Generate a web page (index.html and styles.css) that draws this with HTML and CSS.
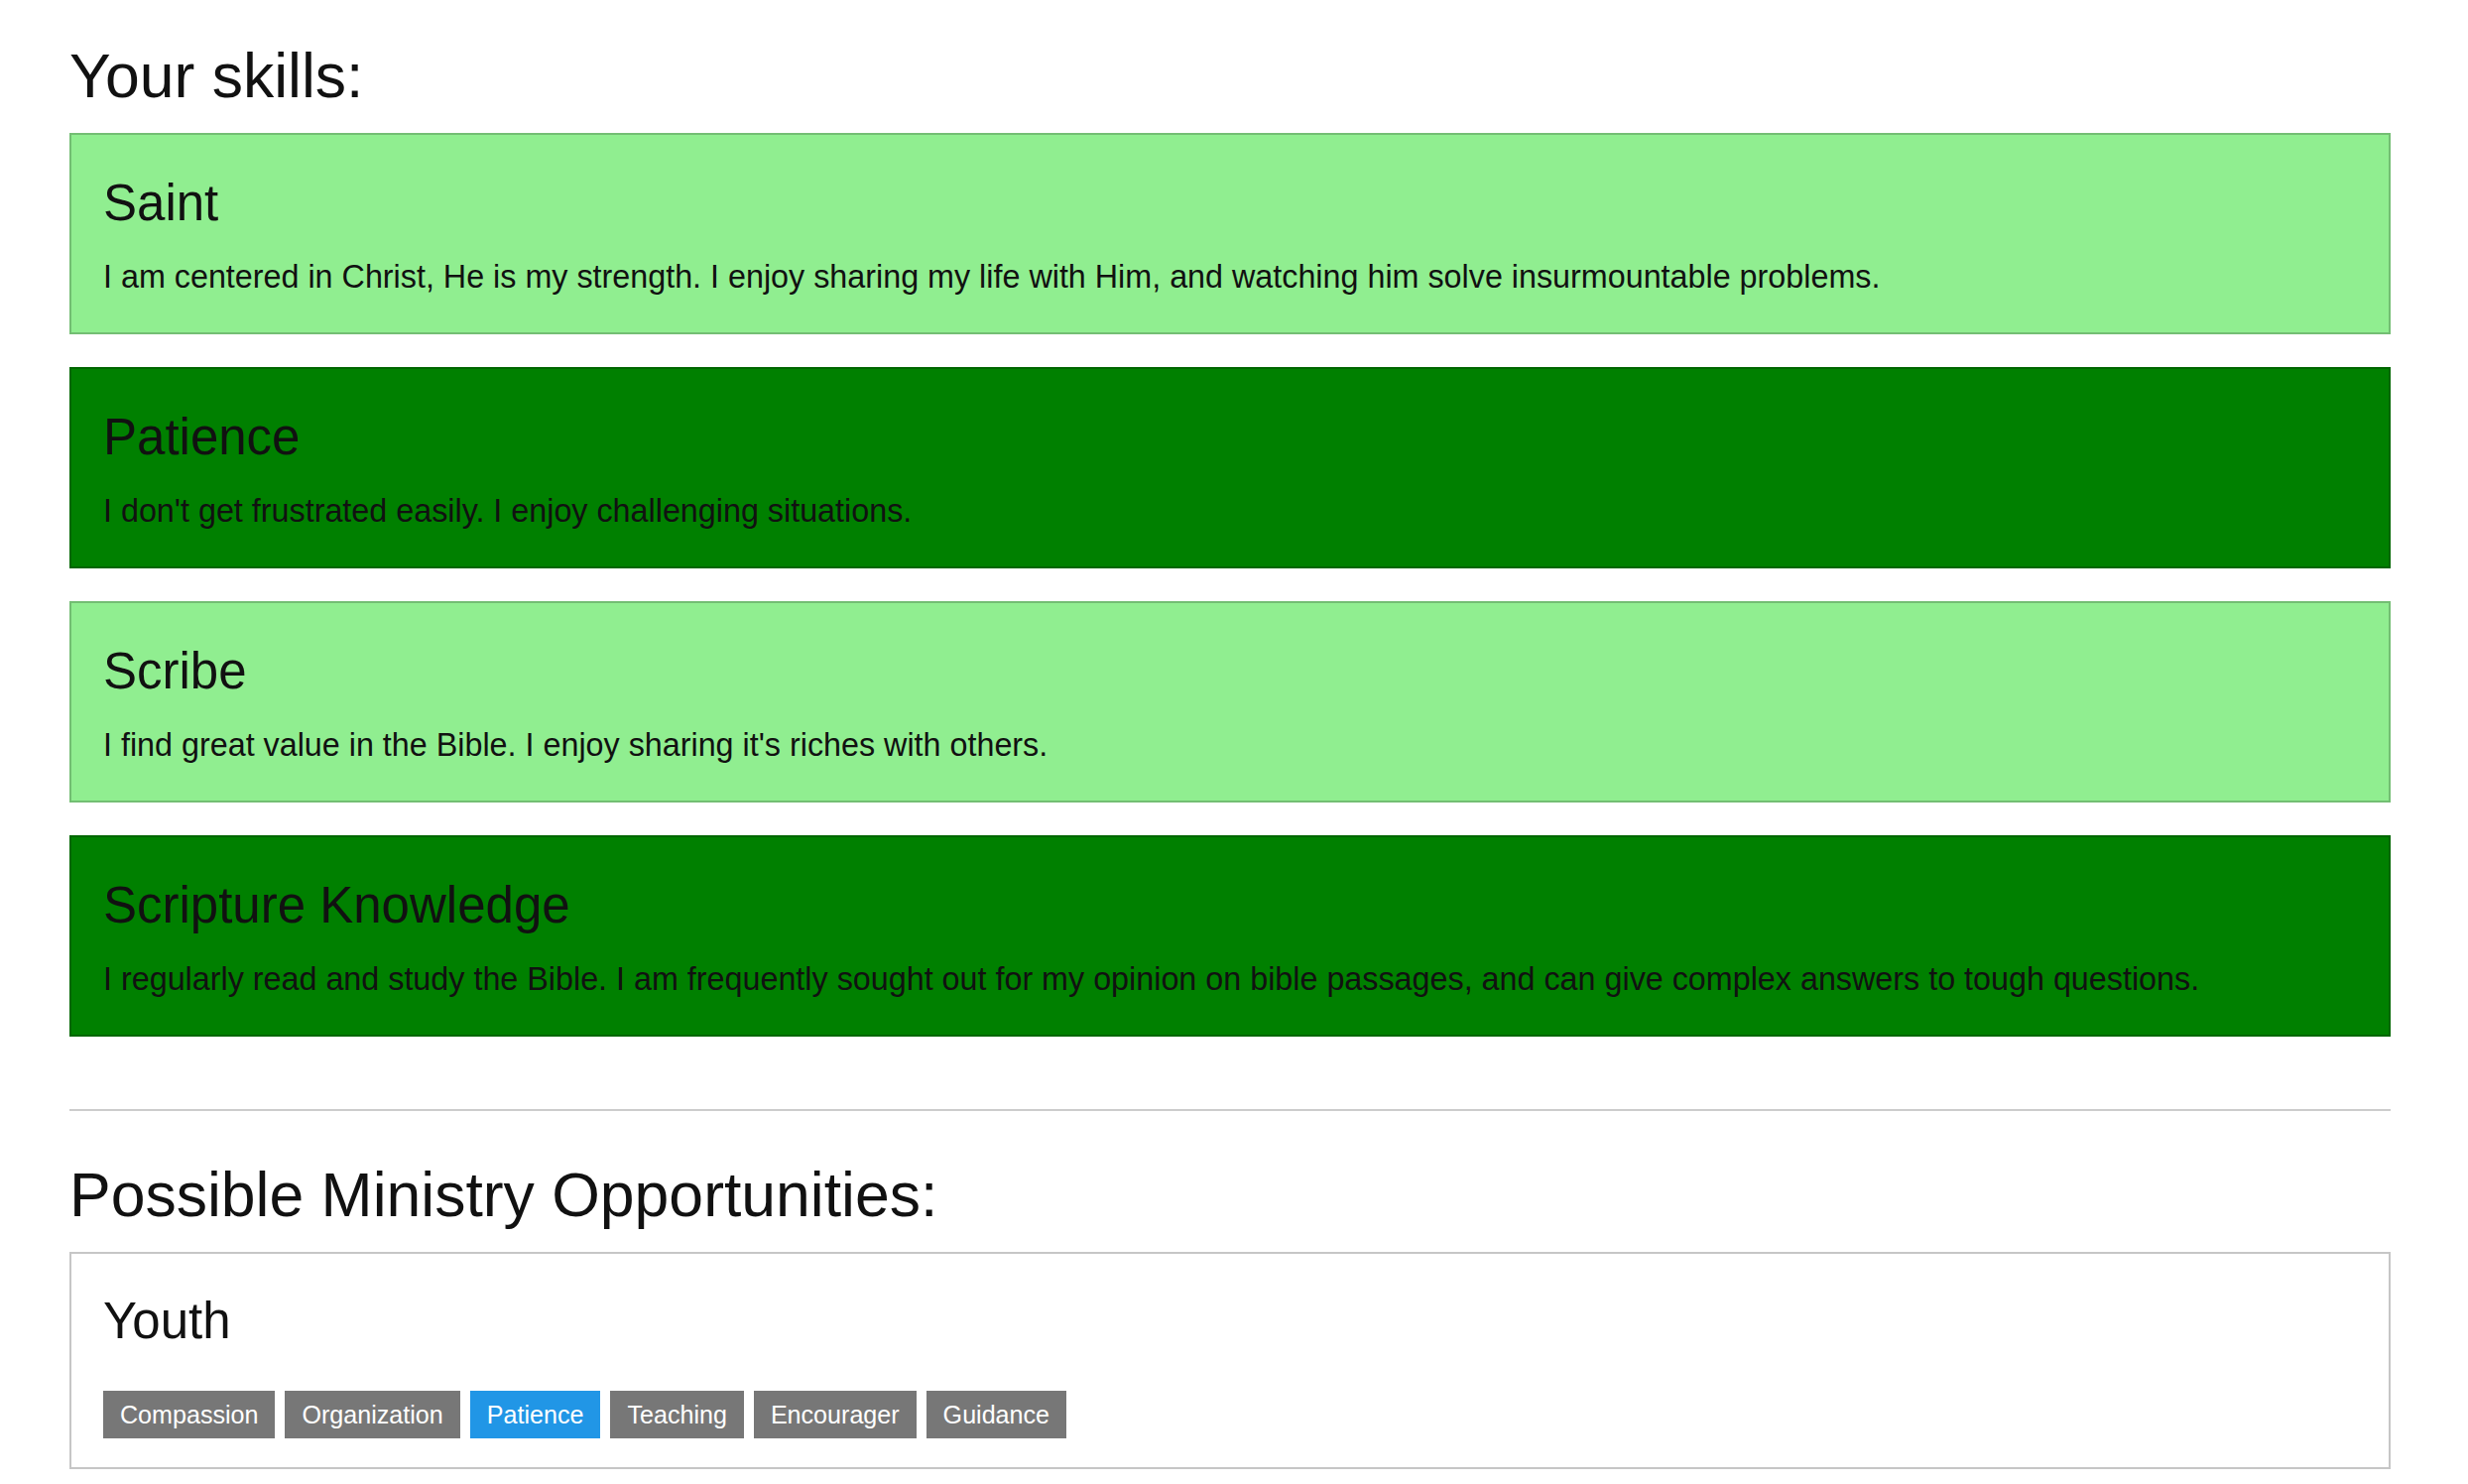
FILE: index.html
```html
<!DOCTYPE html>
<html lang="en">
<head>
<meta charset="utf-8">
<title>Your skills</title>
<link rel="stylesheet" href="styles.css">
</head>
<body>
<main class="page">
  <h1 class="section-title">Your skills:</h1>
  <section class="skill skill-light">
    <h3 class="card-title">Saint</h3>
    <p class="card-text">I am centered in Christ, He is my strength. I enjoy sharing my life with Him, and watching him solve insurmountable problems.</p>
  </section>
  <section class="skill skill-dark">
    <h3 class="card-title">Patience</h3>
    <p class="card-text">I don't get frustrated easily. I enjoy challenging situations.</p>
  </section>
  <section class="skill skill-light">
    <h3 class="card-title">Scribe</h3>
    <p class="card-text">I find great value in the Bible. I enjoy sharing it's riches with others.</p>
  </section>
  <section class="skill skill-dark skill-last">
    <h3 class="card-title">Scripture Knowledge</h3>
    <p class="card-text">I regularly read and study the Bible. I am frequently sought out for my opinion on bible passages, and can give complex answers to tough questions.</p>
  </section>

  <hr class="divider">

  <h1 class="section-title">Possible Ministry Opportunities:</h1>
  <section class="ministry">
    <h3 class="card-title">Youth</h3>
    <div class="tags">
      <span class="tag">Compassion</span>
      <span class="tag">Organization</span>
      <span class="tag tag-match">Patience</span>
      <span class="tag">Teaching</span>
      <span class="tag">Encourager</span>
      <span class="tag">Guidance</span>
    </div>
  </section>
</main>
</body>
</html>
```
FILE: styles.css
```css
html, body {
  margin: 0;
  padding: 0;
  background: #ffffff;
}

body {
  font-family: "Liberation Sans", Arial, Helvetica, sans-serif;
  color: #111111;
}

.page {
  width: 2340px;
  padding: 41px 0 0 70px;
}

.section-title {
  font-size: 62.5px;
  line-height: 70px;
  font-weight: 400;
  margin: 0 0 23px 0;
}

.skill {
  border: 2px solid rgba(0, 0, 0, 0.2);
  padding: 32px 32px 33px 32px;
  margin: 0 0 33px 0;
}

.skill-last {
  margin-bottom: 0;
}

.skill-light {
  background: #90ee90;
}

.skill-dark {
  background: #008000;
}

.card-title {
  font-size: 51px;
  line-height: 60px;
  font-weight: 400;
  margin: 7px 0 22px 0;
}

.card-text {
  font-size: 32.3px;
  line-height: 45px;
  margin: 0;
}

.divider {
  border: 0;
  height: 2px;
  background: #cccccc;
  margin: 73px 0 49px 0;
}

.ministry {
  border: 2px solid #c6c6c6;
  padding: 32px 32px 29px 32px;
}

.ministry .card-title {
  margin: 6px 0 40px 0;
}

.tags {
  display: flex;
  gap: 10px;
}

.tag {
  display: block;
  height: 48px;
  line-height: 48px;
  padding: 0 17px;
  font-size: 25.1px;
  color: #ffffff;
  background: #777777;
}

.tag-match {
  background: #2196e6;
}
```
